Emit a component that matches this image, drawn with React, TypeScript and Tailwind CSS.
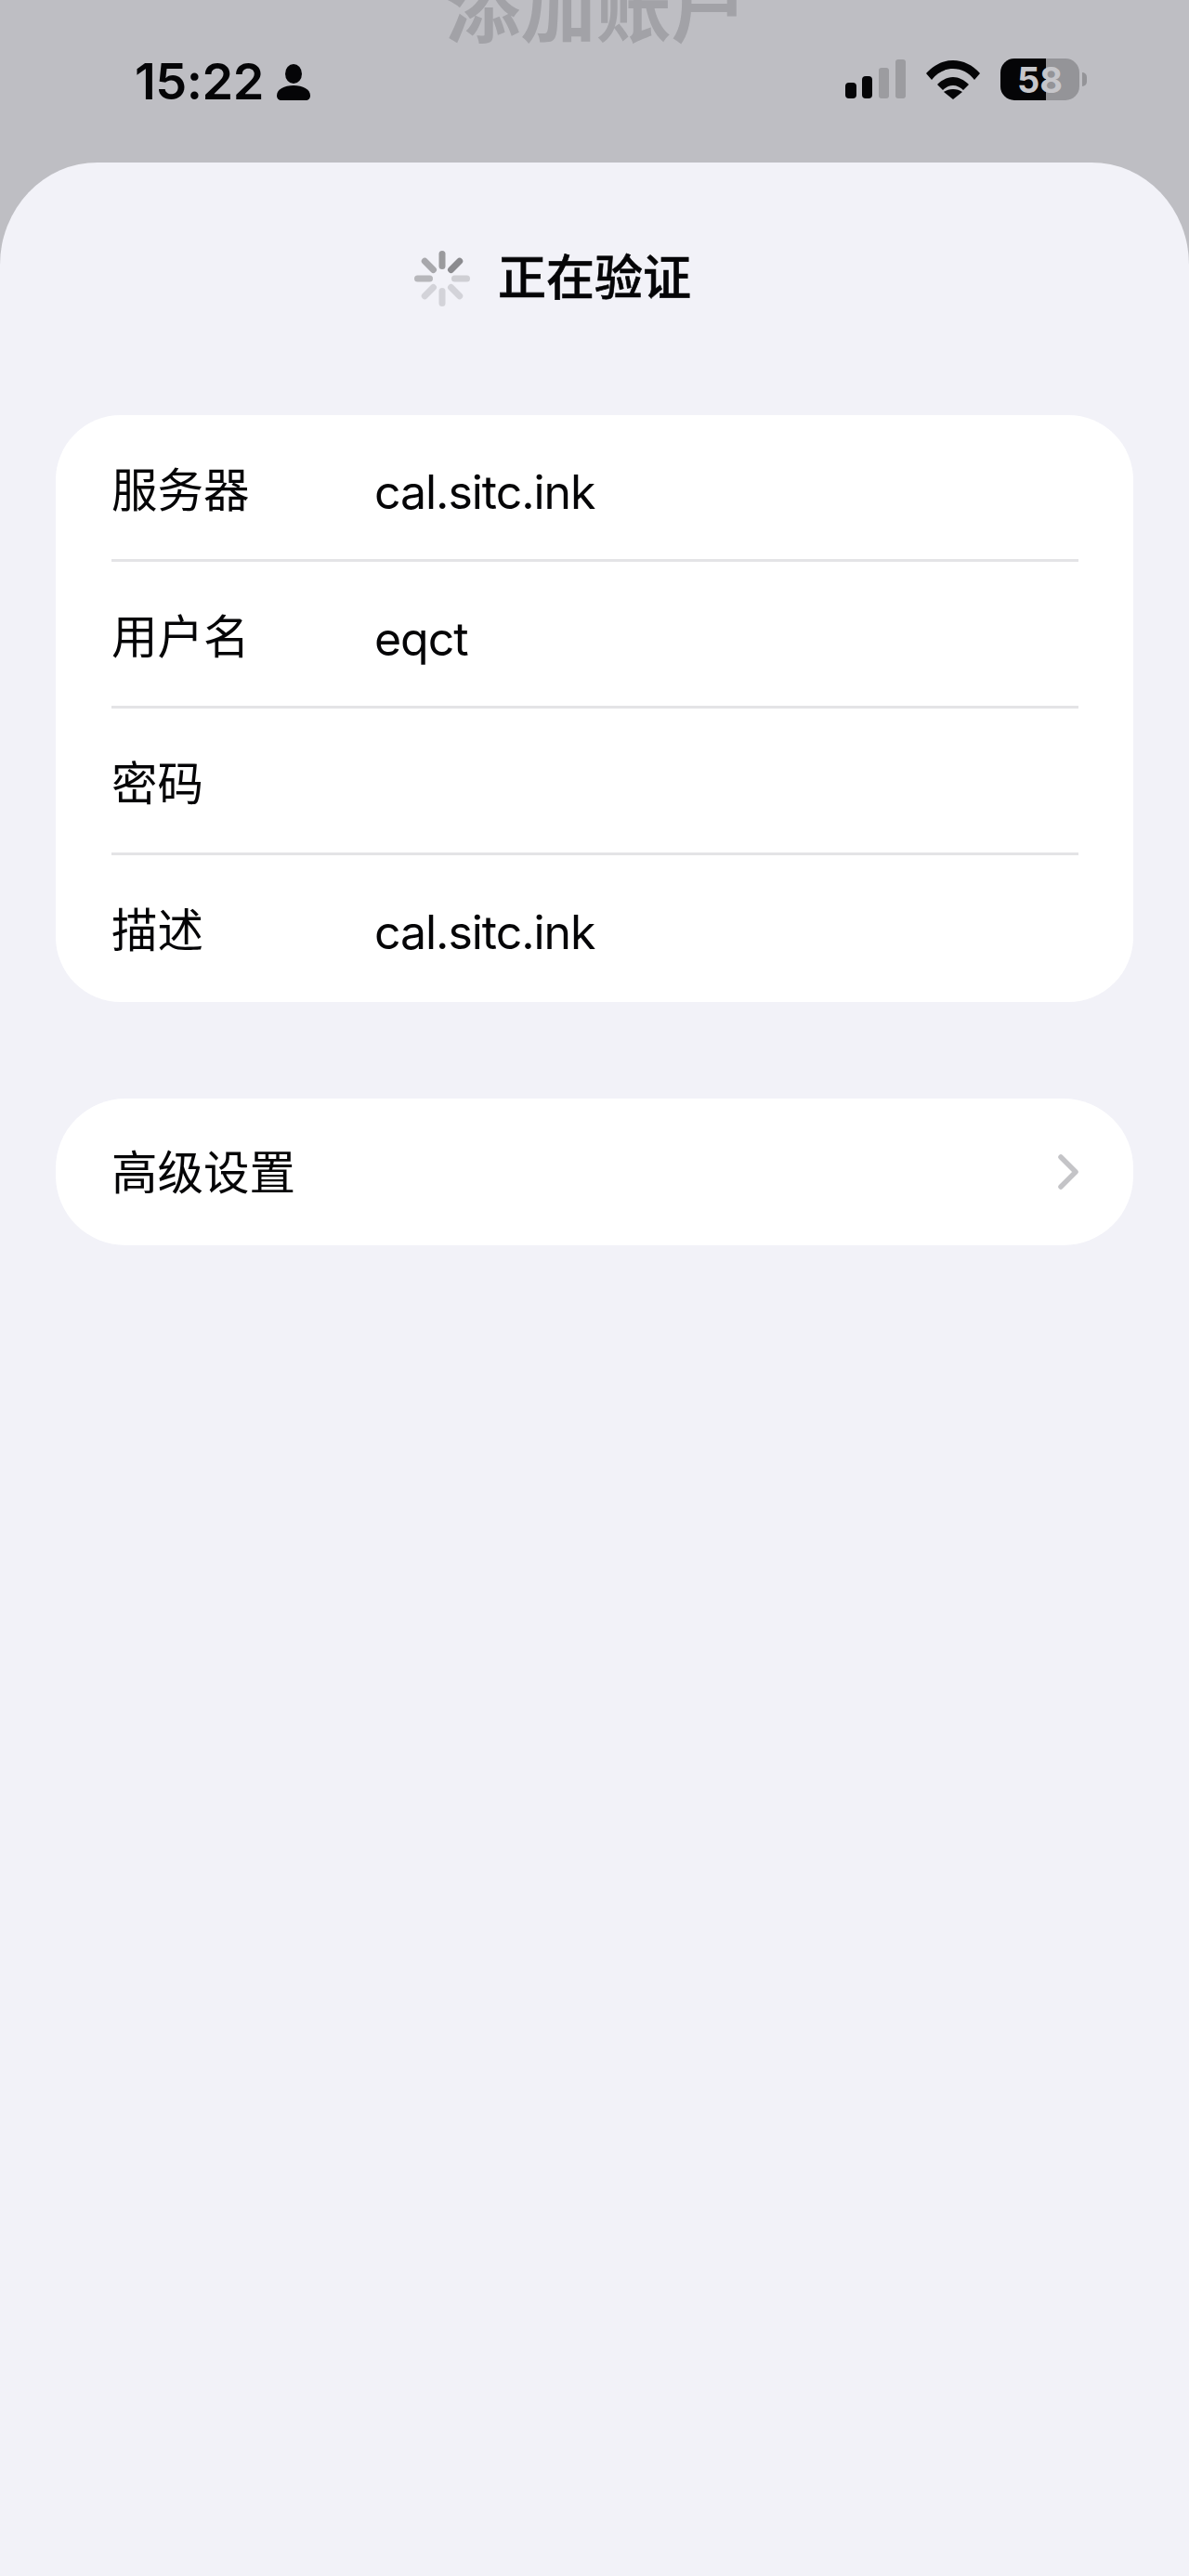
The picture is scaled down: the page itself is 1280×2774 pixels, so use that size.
const rows = [
  { label: "服务器", value: "cal.sitc.ink" },
  { label: "用户名", value: "eqct" },
  { label: "密码", value: "" },
  { label: "描述", value: "cal.sitc.ink" },
];

// spinner spokes, clockwise from the top
const spokes = [
  { angle: 0, opacity: 0.36 },
  { angle: 45, opacity: 0.42 },
  { angle: 90, opacity: 0.14 },
  { angle: 135, opacity: 0.12 },
  { angle: 180, opacity: 0.12 },
  { angle: 225, opacity: 0.12 },
  { angle: 270, opacity: 0.24 },
  { angle: 315, opacity: 0.3 },
];

function Spinner() {
  return (
    <svg width="60" height="60" viewBox="0 0 60 60">
      {spokes.map((s) => (
        <line
          key={s.angle}
          x1="30"
          y1="3.5"
          x2="30"
          y2="16.5"
          stroke="#000"
          strokeWidth="7"
          strokeLinecap="round"
          opacity={s.opacity}
          transform={`rotate(${s.angle} 30 30)`}
        />
      ))}
    </svg>
  );
}

function StatusBar() {
  return (
    <div className="relative flex items-start justify-between pt-[58px] pl-[145px] pr-[110px]">
      <div className="flex items-center gap-[14px]">
        <span className="text-[54px] leading-[60px] font-semibold text-[#050507] tracking-[-0.5px]">15:22</span>
        <svg width="36" height="40" viewBox="0 0 36 40" className="mt-[2px]">
          <ellipse cx="18" cy="10.5" rx="9" ry="10.5" fill="#050507" />
          <path d="M0 34c0-7 8-11 18-11s18 4 18 11c0 3-2 5-5 5H5c-3 0-5-2-5-5z" fill="#050507" />
        </svg>
      </div>
      <div className="flex items-start gap-[22px] pt-[6px]">
        <svg width="65" height="42" viewBox="0 0 65 42">
          <rect x="0" y="25" width="12" height="17" rx="4" fill="#050507" />
          <rect x="18" y="18" width="11" height="24" rx="4" fill="#050507" />
          <rect x="36" y="9" width="11" height="33" rx="3" fill="#9c9ca0" />
          <rect x="54" y="0" width="11" height="42" rx="3" fill="#9c9ca0" />
        </svg>
        <svg width="58" height="44" viewBox="0 0 58 44">
          <path d="M0 15C8 6 18 1 29 1s21 5 29 14l-6 7C46 14 38 10 29 10S12 14 6 22z" fill="#050507" />
          <path d="M12 27c5-5 11-8 17-8s12 3 17 8l-6 6c-3-3-7-5-11-5s-8 2-11 5z" fill="#050507" />
          <path d="M29 43L19 35c3-2 6-3 10-3s7 1 10 3z" fill="#050507" />
        </svg>
        <div className="flex items-center -mt-px">
          <div className="flex h-[45px] w-[85px] items-center justify-center rounded-[15px] bg-[linear-gradient(90deg,#050507_58%,#949498_58%)] text-[38px] leading-none font-bold text-[#c6c6ca]">
            58
          </div>
          <div className="ml-[3px] h-[15px] w-[5px] rounded-r-full bg-[#949498]" />
        </div>
      </div>
    </div>
  );
}

export default function App() {
  return (
    <div className="relative flex min-h-[2774px] flex-col overflow-hidden bg-[#bebec3] font-['Inter','Noto_Sans_CJK_SC',sans-serif]">
      {/* dimmed title of the page behind the sheet */}
      <div className="absolute top-[-40px] left-0 right-0 pl-[3px] text-center text-[81px] leading-[100px] font-bold text-[#a2a2a7]">
        添加账户
      </div>

      <div className="h-[175px]">
        <StatusBar />
      </div>

      <div className="relative flex flex-1 flex-col rounded-tl-[105px_110px] rounded-tr-[105px_110px] bg-[#f2f2f8] px-[60px]">
        <div className="flex h-[272px] items-start justify-center gap-[30px] pt-[95px] pr-[90px]">
          <Spinner />
          <h1 className="text-[52px] leading-[60px] font-medium text-[#050507] [-webkit-text-stroke:0.6px_#050507]">正在验证</h1>
        </div>

        <div className="rounded-[70px] bg-white pl-[60px] pr-[59px]">
          {rows.map((row, i) => (
            <div
              key={row.label}
              className={
                i < rows.length - 1
                  ? "flex h-[158px] items-center border-b-[3px] border-[#e4e4e6] text-[#050507]"
                  : "flex h-[158px] items-center border-b-[3px] border-transparent text-[#050507]"
              }
            >
              <span className="w-[283px] pt-[8px] text-[49.5px]">{row.label}</span>
              <span className="pt-[11px] text-[50px] tracking-[-1.05px]">{row.value}</span>
            </div>
          ))}
        </div>

        <div className="mt-[104px] flex h-[158px] items-center justify-between rounded-[75px] bg-white pl-[60px] pr-[57px] text-[49.5px] text-[#050507]">
          <span className="pt-[2px]">高级设置</span>
          <svg width="24" height="38" viewBox="0 0 24 38">
            <path d="M3 3l16 16L3 35" fill="none" stroke="#c4c4c7" strokeWidth="5.5" strokeLinecap="round" strokeLinejoin="round" />
          </svg>
        </div>
      </div>
    </div>
  );
}
